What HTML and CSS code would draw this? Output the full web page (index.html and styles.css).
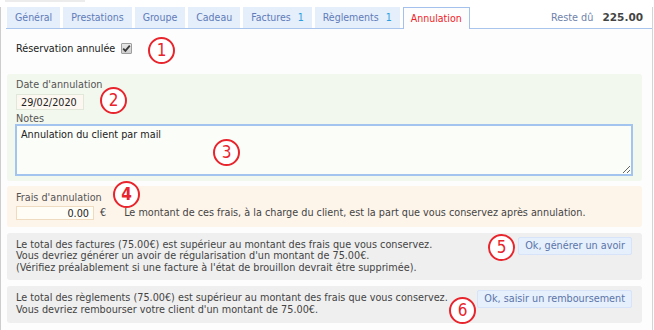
FILE: index.html
```html
<!DOCTYPE html>
<html lang="fr">
<head>
<meta charset="utf-8">
<title>Annulation</title>
<link rel="stylesheet" href="styles.css">
</head>
<body>
<div class="topbar"><div class="topbar-edge"></div></div>
<div class="page">
  <div class="tabs">
    <div class="tab">Général</div>
    <div class="tab">Prestations</div>
    <div class="tab">Groupe</div>
    <div class="tab">Cadeau</div>
    <div class="tab">Factures <span class="count">1</span></div>
    <div class="tab">Règlements <span class="count">1</span></div>
    <div class="tab active">Annulation</div>
    <div class="balance">Reste dû <b>225.00</b></div>
  </div>

  <div class="cancel-row">
    <span>Réservation annulée</span>
    <span class="checkbox"><svg width="9" height="9" viewBox="0 0 9 9"><path d="M1.2 4.6 L3.4 6.9 L7.8 1.6" fill="none" stroke="#3a3a3a" stroke-width="1.8"/></svg></span>
  </div>

  <div class="panel panel-green">
    <div class="label">Date d'annulation</div>
    <div class="date-input">29/02/2020</div>
    <div class="label label-notes">Notes</div>
    <textarea class="notes">Annulation du client par mail</textarea>
  </div>

  <div class="panel panel-orange">
    <div class="label">Frais d'annulation</div>
    <div class="fee-row">
      <span class="amount-input">0.00</span>
      <span class="currency">€</span>
      <span class="fee-help">Le montant de ces frais, à la charge du client, est la part que vous conservez après annulation.</span>
    </div>
  </div>

  <div class="panel panel-gray">
    <div class="notice">Le total des factures (75.00€) est supérieur au montant des frais que vous conservez.<br>Vous devriez générer un avoir de régularisation d'un montant de 75.00€.<br>(Vérifiez préalablement si une facture à l'état de brouillon devrait être supprimée).</div>
    <button class="action">Ok, générer un avoir</button>
  </div>

  <div class="panel panel-gray panel-last">
    <div class="notice">Le total des règlements (75.00€) est supérieur au montant des frais que vous conservez.<br>Vous devriez rembourser votre client d'un montant de 75.00€.</div>
    <button class="action">Ok, saisir un remboursement</button>
  </div>

  <div class="badge b1">1</div>
  <div class="badge b2">2</div>
  <div class="badge b3">3</div>
  <div class="badge b4">4</div>
  <div class="badge b5">5</div>
  <div class="badge b6">6</div>
</div>
</body>
</html>
```

FILE: styles.css
```css
* { box-sizing: border-box; }

html, body {
  margin: 0;
  background: #ffffff;
}

body {
  font-family: "DejaVu Sans Condensed", "DejaVu Sans", sans-serif;
  font-size: 10.75px;
  line-height: 11.5px;
  color: #333;
}

.topbar {
  height: 7px;
  padding-left: 5px;
}

.topbar-edge {
  width: 80px;
  height: 2px;
  background: #ececec;
}

.page {
  position: relative;
  width: 653px;
  min-height: 323px;
  border-left: 1px solid #cdcdcd;
  border-right: 1px solid #d4d4d4;
  background: #fcfdfc;
}

/* Tabs */
.tabs {
  display: flex;
  align-items: flex-end;
  gap: 3px;
  height: 22px;
  margin-left: 5px;
  padding-left: 1px;
  border-bottom: 1px solid #a9c5ee;
  background: #ffffff;
  font-size: 10.5px;
}

.tab {
  height: 21px;
  line-height: 21px;
  padding: 0 8px;
  background: #e5eefb;
  color: #5f7cb8;
  white-space: nowrap;
}

.tab .count {
  margin-left: 4px;
  color: #2a9ee0;
}

.tab.active {
  height: 22px;
  margin-bottom: -1px;
  border: 1px solid #a3c1ec;
  border-bottom: none;
  background: #fcfdfc;
  color: #f0202a;
  padding: 0 7px;
  line-height: 20px;
}

.balance {
  margin-left: auto;
  align-self: center;
  padding-right: 9px;
  color: #6f83aa;
  white-space: nowrap;
  font-size: 10.75px;
}

.balance b {
  margin-left: 6px;
  color: #444;
  font-family: "DejaVu Sans", sans-serif;
  font-size: 10.5px;
}

/* Cancel row */
.cancel-row {
  display: flex;
  align-items: center;
  height: 45px;
  padding: 0 0 6px 15px;
  color: #222;
}

.checkbox {
  display: inline-flex;
  align-items: center;
  justify-content: center;
  width: 11px;
  height: 11px;
  margin-left: 6px;
  border: 1px solid #9d9d9d;
  border-radius: 1px;
  background: linear-gradient(#e8e8e8, #cfcfcf);
}

/* Panels */
.panel {
  margin: 0 10px 0 6px;
  border-radius: 3px;
}

.panel-green {
  padding: 5px 9px 5px 9px;
  background: #f3f8ee;
}

.label {
  color: #555;
}

.date-input {
  width: 68px;
  height: 16px;
  margin-top: 3px;
  padding: 0 0 0 4px;
  line-height: 15px;
  border: 1px solid #e1e8da;
  background: #fdf7f1;
  color: #222;
}

.label-notes {
  margin-top: 3px;
}

.notes {
  display: block;
  width: 618px;
  height: 52px;
  margin-left: -1px;
  padding: 3px 4px;
  border: 2px solid #a3c4ee;
  border-radius: 0;
  background: #fbfdf8;
  font: inherit;
  color: #222;
  outline: none;
}

.panel-orange {
  margin-top: 5px;
  padding: 6px 9px 7px 9px;
  background: #fdf4ea;
}

.fee-row {
  display: flex;
  align-items: center;
  margin-top: 2px;
}

.amount-input {
  width: 78px;
  height: 14px;
  padding-right: 4px;
  line-height: 13px;
  text-align: right;
  border: 1px solid #efdcc0;
  background: #fffdf6;
  color: #222;
}

.currency {
  margin-left: 6px;
  color: #444;
}

.fee-help {
  margin-left: 18px;
  color: #444;
}

.panel-gray {
  display: flex;
  justify-content: space-between;
  align-items: flex-start;
  margin-top: 6px;
  padding: 6px 10px 7px 9px;
  background: #efefef;
  color: #444;
}

.panel-last {
  padding-bottom: 8px;
}

.action {
  margin-top: -2px;
  height: 18px;
  padding: 0 6px;
  border: 1px solid #d6e3f8;
  border-radius: 2px;
  background: #e6effc;
  color: #5b75a8;
  font: inherit;
  white-space: nowrap;
}

/* Annotation badges (overlay) */
.badge {
  position: absolute;
  width: 27px;
  height: 27px;
  border: 2px solid #e8242c;
  border-radius: 50%;
  background: #ffffff;
  color: #e8242c;
  font-family: "DejaVu Sans Condensed", "DejaVu Sans", sans-serif;
  font-size: 17px;
  line-height: 23px;
  text-align: center;
}

.b1 { left: 147px; top: 30px; }
.b2 { left: 99px;  top: 80px; }
.b3 { left: 212px; top: 132px; }
.b4 { left: 112px; top: 174px; font-weight: bold; }
.b5 { left: 487px; top: 227px; }
.b6 { left: 448px; top: 290px; }
```
